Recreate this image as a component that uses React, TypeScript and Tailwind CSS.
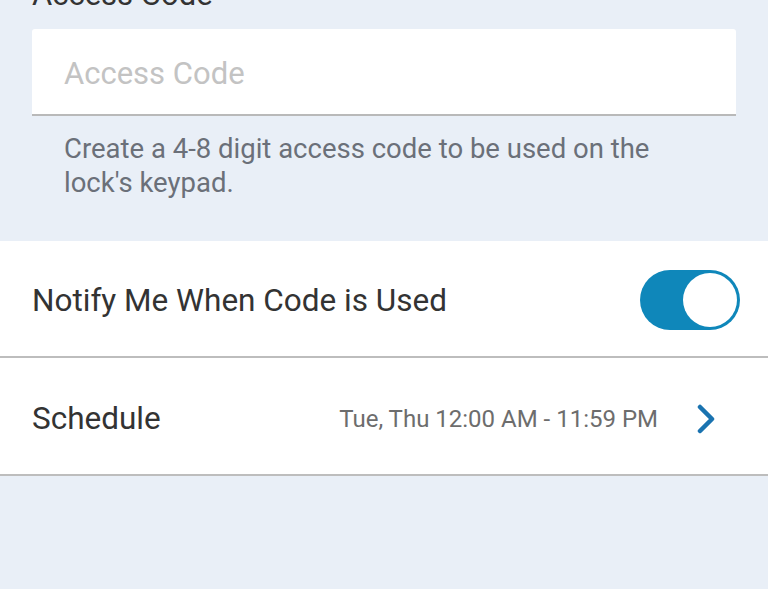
export default function App() {
  return (
    <div className="h-[589px] w-[768px] overflow-hidden bg-[#e9eff7] font-['Roboto','Noto_Sans',sans-serif]">
      {/* code field */}
      <div className="px-8">
        <div className="-mt-[22px] h-[34px] text-[31px] leading-[34px] text-[#333333]">Access Code</div>
        <div className="mt-[17px] flex h-[87px] items-center rounded-t-[3px] border-b-2 border-[#b9b9b9] bg-white px-8 pt-[6px]">
          <span className="text-[31px] text-[#c3c3c3]">Access Code</span>
        </div>
        <p className="mt-[16px] px-8 text-[27.5px] leading-[34px] text-[#6b7079]">
          Create a 4-8 digit access code to be used on the lock's keypad.
        </p>
      </div>

      {/* settings rows */}
      <div className="mt-[41px] bg-white">
        <div className="flex h-[117px] items-center justify-between border-b-2 border-[#bdbdbd] pl-8 pr-[28px]">
          <span className="mt-[4px] text-[31.5px] text-[#333333]">Notify Me When Code is Used</span>
          <div className="mt-[2px] flex h-[60px] w-[100px] items-center justify-end rounded-full bg-[#0f87ba] pr-[3px]">
            <div className="h-[54px] w-[54px] rounded-full bg-white" />
          </div>
        </div>
        <div className="flex h-[118px] items-center border-b-2 border-[#bdbdbd] pl-8 pr-[50px] pt-[6px]">
          <span className="text-[31.5px] text-[#333333]">Schedule</span>
          <span className="ml-auto text-[24px] text-[#6d6d6d]">Tue, Thu 12:00 AM - 11:59 PM</span>
          <svg className="ml-[36px]" width="24" height="30" viewBox="0 0 24 30" fill="none">
            <path d="M6 3 L18 15 L6 27" stroke="#1a73b0" strokeWidth="4.5" strokeLinecap="round" strokeLinejoin="round" />
          </svg>
        </div>
      </div>
    </div>
  );
}
